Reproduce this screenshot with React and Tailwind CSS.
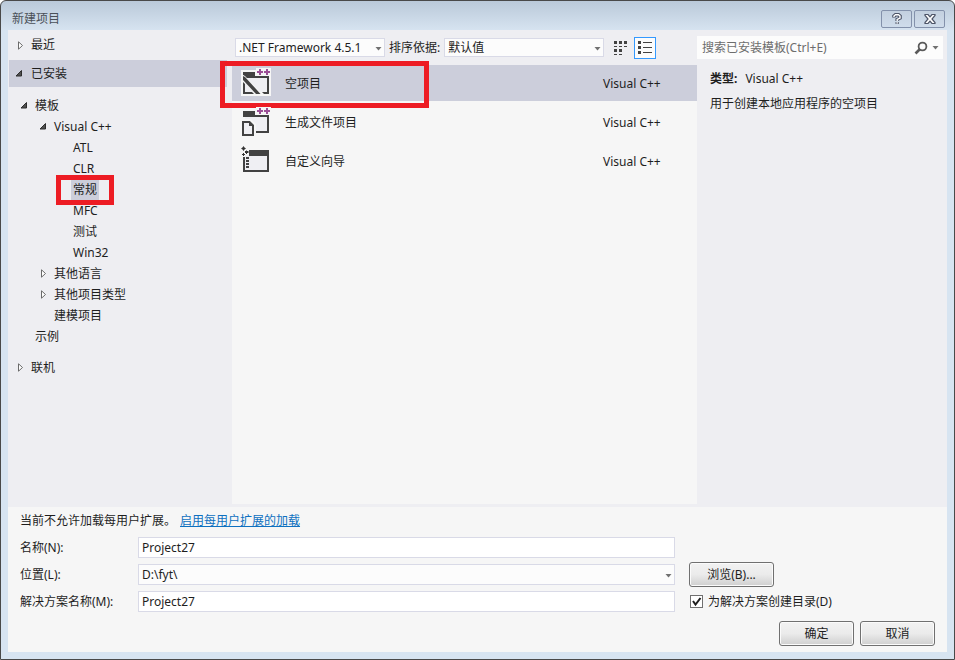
import React, { useState } from "react";

const tree = [
  { label: "模板", pad: "pl-3", state: "open" },
  { label: "Visual C++", pad: "pl-[31px]", state: "open" },
  { label: "ATL", pad: "pl-[50px]" },
  { label: "CLR", pad: "pl-[50px]" },
  { label: "常规", pad: "pl-[50px]", selected: true },
  { label: "MFC", pad: "pl-[50px]" },
  { label: "测试", pad: "pl-[50px]" },
  { label: "Win32", pad: "pl-[50px]" },
  { label: "其他语言", pad: "pl-[31px]", state: "closed" },
  { label: "其他项目类型", pad: "pl-[31px]", state: "closed" },
  { label: "建模项目", pad: "pl-[31px]" },
  { label: "示例", pad: "pl-3" },
];

const templates = [
  { name: "空项目", lang: "Visual C++", Icon: EmptyProjectIcon },
  { name: "生成文件项目", lang: "Visual C++", Icon: MakefileIcon },
  { name: "自定义向导", lang: "Visual C++", Icon: WizardIcon },
];

function Arrow({ state }) {
  return (
    <svg width="8" height="9" viewBox="0 0 8 9" className="shrink-0">
      {state === "open" && (
        <path d="M6.5 1.5v5.5H1z" fill="#505050" stroke="#2d2d2d" />
      )}
      {state === "closed" && (
        <path d="M2.5 .8v7.400L6.500 4.500z" fill="#fff" stroke="#6a6a6a" />
      )}
    </svg>
  );
}

function PlusPlus() {
  return (
    <>
      <path d="M15 0h15v8H15z" fill="#f6f6f6" />
      <path
        d="M18 1h2v2h2v2h-2v2h-2V5h-2V3h2zM25 1h2v2h2v2h-2v2h-2V5h-2V3h2z"
        fill="#9b4f96"
      />
    </>
  );
}

function EmptyProjectIcon() {
  return (
    <svg width="30" height="30" viewBox="0 0 30 30">
      <path d="M0 2h30v26H0z" fill="#f6f6f6" />
      <path d="M4 9h22v15H4z" fill="#efeff3" />
      <path d="M2 4h12v4h14v2H5L2 7z" fill="#424242" />
      <path d="M26 8h2v18h-5l-2-2h5zM2 14l2 2v8h7l2 2H2z" fill="#424242" />
      <path d="M2 7l2 1 17 18h-7L2 13z" fill="#f6f6f6" />
      <path d="M2 8l2 1 15.500 17H15L2 12z" fill="#424242" />
      <PlusPlus />
    </svg>
  );
}

function MakefileIcon() {
  return (
    <svg width="30" height="30" viewBox="0 0 30 30">
      <path d="M4 9h22v15H4z" fill="#efeff3" />
      <path d="M2 4h12v4h14v18H15v-2h11V10H2z" fill="#424242" />
      <path d="M0 12h10l5 5v13H0z" fill="#f6f6f6" />
      <path d="M2 15h6.500L12 18.500V28H2z" fill="#efeff3" stroke="#424242" strokeWidth="2" />
      <path d="M8 14v5h5z" fill="#424242" />
      <PlusPlus />
    </svg>
  );
}

function WizardIcon() {
  return (
    <svg width="30" height="30" viewBox="0 0 30 30">
      <path d="M4 9h22v15H4z" fill="#efeff3" />
      <path d="M8 4h20v22H2V11h2v13h22V10H8z" fill="#424242" />
      <path
        d="M5 11h3v2H5zM5 14h3v2H5zM5 17h3v2H5zM5 20h3v2H5z"
        fill="#424242"
      />
      <path
        d="M2.500 0l1 1.500 1.500 1-1.500 1-1 1.500-1-1.500-1.500-1 1.500-1zM6 4v1h1.500v2H6v1H5V7H4V5h1zM2 7h1v1h1v1H3v1H2V9H1V8h1z"
        fill="#333"
      />
    </svg>
  );
}

function Chevron({ className }) {
  return (
    <svg
      width="7"
      height="4"
      viewBox="0 0 7 4"
      className={`pointer-events-none ${className}`}
    >
      <path d="M0.500 0h6L3.500 3.500z" fill="#717171" />
    </svg>
  );
}

function Combo({ id, label, value, className }) {
  return (
    <div className={`relative ${className}`}>
      <select
        id={id}
        aria-label={label}
        defaultValue={value}
        className="h-full w-full appearance-none border border-[#d9dae7] bg-[#fcfcfc] pr-4 pl-[3px]"
      >
        <option>{value}</option>
      </select>
      <Chevron className="absolute top-1/2 right-[3px] -mt-px" />
    </div>
  );
}

function TitleBar() {
  const button =
    "flex h-[18px] w-[31px] items-center justify-center rounded-xs border border-[#8391ab] bg-linear-to-b from-[#c3d0df] to-[#cfdceb]";

  return (
    <header className="flex h-[29px] items-start justify-between pt-2 pr-[9px] pl-[11px]">
      <h1 className="leading-5 text-[#4a5058]">新建项目</h1>
      <div className="flex gap-0.5 pt-px">
        <button aria-label="帮助" className={button}>
          <svg width="10" height="12" viewBox="0 0 10 12" fill="none">
            <path d="M2 4.500V3l1.500-1.200h3L8 3v2L5.200 6.500V8M5.200 9.200v1.500" stroke="#4d5467" strokeWidth="3.600" />
            <path d="M2 4V3l1.500-1.200h3L8 3v2L5.200 6.500V8M5.200 9.200v1.300" stroke="#fff" strokeWidth="1.400" />
          </svg>
        </button>
        <button aria-label="关闭" className={button}>
          <svg width="12" height="10" viewBox="0 0 12 10">
            <path
              d="M1 .5h3L6 2.800 8 .5h3v1L8 5l3 3.500v1H8L6 7.200 4 9.500H1v-1L4 5 1 1.500z"
              fill="#fff"
              stroke="#4d5467"
              strokeWidth="1.200"
            />
          </svg>
        </button>
      </div>
    </header>
  );
}

function Sidebar() {
  return (
    <nav className="w-56 shrink-0">
      <button className="flex h-[30px] items-center gap-[7px] pl-2">
        <Arrow state="closed" />
        最近
      </button>
      <button className="ml-px flex h-[27px] w-[218px] items-center gap-2 bg-[#cccedb] pl-[6px]">
        <Arrow state="open" />
        已安装
      </button>
      <ul className="pt-2">
        {tree.map((item) => (
          <li key={item.label} className={`flex h-[21px] ${item.pad}`}>
            <button className="flex items-center gap-[7px]">
              <Arrow state={item.state} />
              {item.selected ? (
                <span className="relative -mx-0.5 bg-[#cccedb] px-0.5 leading-5">
                  {item.label}
                  <span className="pointer-events-none absolute -inset-x-[15px] -inset-y-[5px] border-[5px] border-[#ed1c24]" />
                </span>
              ) : (
                item.label
              )}
            </button>
          </li>
        ))}
      </ul>
      <button className="mt-2.5 flex h-[21px] items-center gap-[7px] pl-2">
        <Arrow state="closed" />
        联机
      </button>
    </nav>
  );
}

function TemplateList() {
  const [current, setCurrent] = useState(0);

  return (
    <main className="flex min-w-0 flex-1 flex-col">
      <div className="flex h-[35px] items-center pl-[3px]">
        <Combo
          id="framework"
          label="框架"
          value=".NET Framework 4.5.1"
          className="h-[19px] w-[150px]"
        />
        <label htmlFor="sort" className="ml-1">
          排序依据:
        </label>
        <Combo id="sort" value="默认值" className="ml-1 h-[19px] w-40" />
        <button aria-label="小图标" className="ml-2.5">
          <svg width="14" height="14" viewBox="0 0 14 14" fill="#424242">
            <path d="M0 0h3v3H0zM5 0h3v3H5zM10 0h3v3h-3zM0 5h3v1H0zM5 5h3v1H5zM10 5h3v1h-3zM0 8h3v3H0zM5 8h3v3H5zM0 13h3v1H0zM5 13h3v1H5z" />
          </svg>
        </button>
        <button
          aria-label="中等图标"
          className="ml-1.5 flex h-[22px] w-[22px] items-center justify-center border border-[#3399ff] bg-[#fcfcfc]"
        >
          <svg width="14" height="14" viewBox="0 0 14 14" fill="#424242">
            <path d="M0 0h3v3H0zM5 1h9v1H5zM0 5h3v3H0zM5 6h9v1H5zM0 10h3v3H0zM5 11h9v1H5z" />
          </svg>
        </button>
      </div>
      <ul className="flex flex-1 flex-col gap-[3px] bg-[#f6f6f6]">
        {templates.map(({ name, lang, Icon }, i) => (
          <li key={name} className="relative">
            <button
              onClick={() => setCurrent(i)}
              className={`flex h-9 w-full items-center pr-[30px] pl-[9px] ${
                i === current ? "bg-[#cccedb]" : ""
              }`}
            >
              <Icon />
              <span className="ml-3.5 flex-1 pt-0.5 text-left">{name}</span>
              <span className="w-16 pt-0.5 text-left">{lang}</span>
            </button>
            {i === 0 && (
              <span className="pointer-events-none absolute -top-1 -bottom-[7px] -left-3 w-[209px] border-[5px] border-[#ed1c24]" />
            )}
          </li>
        ))}
      </ul>
    </main>
  );
}

function Details() {
  return (
    <aside className="w-[250px] shrink-0 pt-1.5 pr-1">
      <div className="flex h-[23px] items-center bg-[#fcfcfc] pr-1">
        <input
          type="text"
          aria-label="搜索"
          placeholder="搜索已安装模板(Ctrl+E)"
          className="min-w-0 flex-1 pl-[5px] placeholder:text-[#6d6d6d]"
        />
        <button aria-label="搜索模板" className="mr-1">
          <svg width="14" height="14" viewBox="0 0 14 14" fill="none">
            <circle cx="8.500" cy="5.500" r="3.900" stroke="#5a5a5a" strokeWidth="1.800" />
            <path d="M6 8L1.500 12.500" stroke="#5a5a5a" strokeWidth="2.600" />
          </svg>
        </button>
        <Chevron className="" />
      </div>
      <div className="flex flex-col gap-[5px] pt-2.5 pl-[13px] leading-5">
        <p>
          <b className="mr-2">类型:</b>
          Visual C++
        </p>
        <p>用于创建本地应用程序的空项目</p>
      </div>
    </aside>
  );
}

function ProjectForm() {
  const [makeDir, setMakeDir] = useState(true);
  const push =
    "h-[25px] rounded-[3px] border border-[#707070] bg-linear-to-b from-[#f2f2f2] from-0% via-[#ebebeb] via-50% to-[#cfcfcf] shadow-[inset_0_0_0_1px_#fbfbfb]";
  const field = "h-[21px] w-full border border-[#d9dae7] bg-white pl-[3px]";

  return (
    <form
      onSubmit={(e) => e.preventDefault()}
      className="bg-[#f6f6f6] pr-3 pb-1.5 pl-3"
    >
      <p className="flex h-[27px] items-center gap-1">
        当前不允许加载每用户扩展。
        <a href="#extensions" className="text-[#0e70c0] underline">
          启用每用户扩展的加载
        </a>
      </p>
      <div className="grid auto-rows-[27px] grid-cols-[118px_1fr_260px] items-center">
        <label htmlFor="name">名称(N):</label>
        <input id="name" type="text" defaultValue="Project27" className={field} />
        <span />
        <label htmlFor="location">位置(L):</label>
        <Combo id="location" value="D:\fyt\" className="h-[21px]" />
        <button type="button" className={`ml-3.5 w-[85px] ${push}`}>
          浏览(B)...
        </button>
        <label htmlFor="solution">解决方案名称(M):</label>
        <input id="solution" type="text" defaultValue="Project27" className={field} />
        <label className="ml-[15px] flex items-center gap-[5px]">
          <span className="relative flex">
            <input
              type="checkbox"
              checked={makeDir}
              onChange={(e) => setMakeDir(e.target.checked)}
              className="h-[13px] w-[13px] appearance-none border border-[#707070] bg-white"
            />
            {makeDir && (
              <svg
                width="13"
                height="13"
                viewBox="0 0 13 13"
                className="pointer-events-none absolute inset-0"
              >
                <path d="M3 6l2.500 3.500 5-6.500" fill="none" stroke="#1e1e1e" strokeWidth="2" />
              </svg>
            )}
          </span>
          为解决方案创建目录(D)
        </label>
      </div>
      <div className="flex justify-end gap-1.5 pt-1.5">
        <button type="submit" className={`w-[75px] ${push}`}>
          确定
        </button>
        <button type="button" className={`w-[75px] ${push}`}>
          取消
        </button>
      </div>
    </form>
  );
}

function App() {
  return (
    <div className="flex min-h-screen flex-col rounded-t-md border border-[#494949] bg-[#d7e4f1] bg-linear-to-b from-[#bac9d9] to-[#d7e4f1] to-[30px] font-['Noto_Sans','Noto_Sans_CJK_SC',sans-serif] text-[12px] text-[#1e1e1e]">
      <TitleBar />
      <div className="mx-[7px] mb-[7px] flex flex-1 flex-col bg-[#eeeef2]">
        <div className="flex flex-1 pb-[3px]">
          <Sidebar />
          <TemplateList />
          <Details />
        </div>
        <ProjectForm />
      </div>
    </div>
  );
}

export default App;
